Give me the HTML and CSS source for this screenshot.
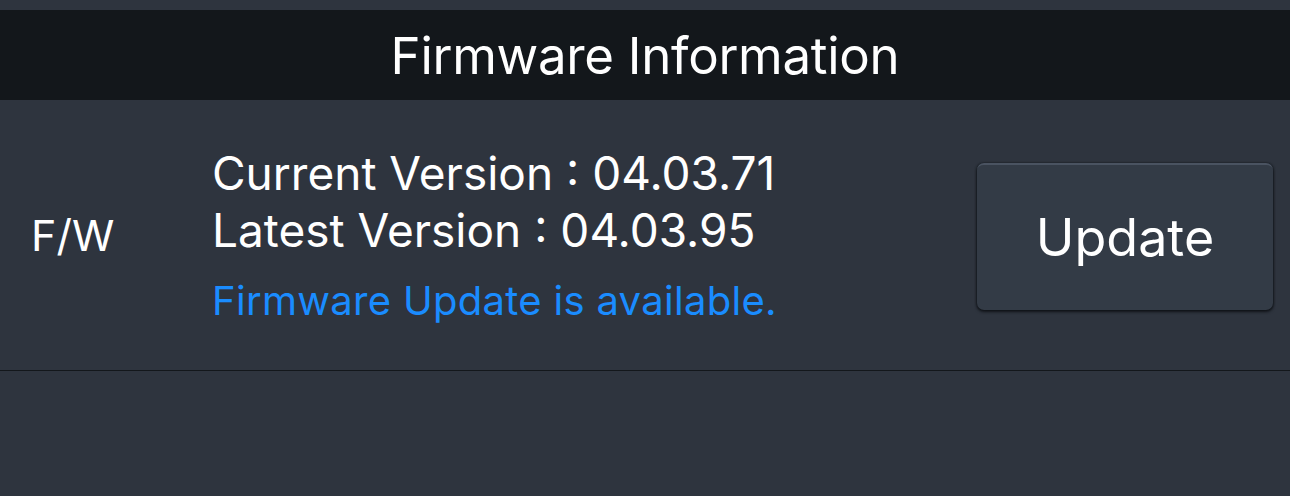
FILE: index.html
```html
<!DOCTYPE html>
<html>
<head>
<meta charset="utf-8">
<link rel="stylesheet" href="styles.css">
</head>
<body>
<div class="page">
  <div class="topstrip"></div>
  <header class="title-bar">Firmware Information</header>
  <section class="row">
    <div class="label">F/W</div>
    <div class="info">
      <div class="line">Current Version : 04.03.71</div>
      <div class="line">Latest Version : 04.03.95</div>
      <div class="notice">Firmware Update is available.</div>
    </div>
    <button class="update-btn">Update</button>
  </section>
</div>
</body>
</html>
```
FILE: styles.css
```css
html, body {
  margin: 0;
  padding: 0;
  background: #2e343e;
}
body {
  font-family: Inter, "Noto Sans", sans-serif;
  color: #ffffff;
  width: 1290px;
  height: 496px;
  overflow: hidden;
}
.page {
  display: flex;
  flex-direction: column;
}
.topstrip {
  height: 10px;
}
.title-bar {
  height: 90px;
  background: #13171b;
  display: flex;
  align-items: center;
  justify-content: center;
  font-size: 51px;
  letter-spacing: -0.3px;
}
.row {
  height: 270px;
  border-bottom: 1px solid #13171b;
  display: flex;
  align-items: center;
}
.label {
  width: 212px;
  padding-left: 31px;
  box-sizing: border-box;
  font-size: 43px;
}
.info {
  flex: 1;
  display: flex;
  flex-direction: column;
}
.line {
  font-size: 46px;
  line-height: 57px;
}
.notice {
  color: #1a8cff;
  font-size: 40px;
  line-height: 48px;
  margin-top: 18px;
  letter-spacing: 0.3px;
}
.update-btn {
  width: 296px;
  height: 147px;
  margin-right: 17px;
  margin-top: 2px;
  background: #333b46;
  border: none;
  border-top: 2px solid #4a5361;
  border-radius: 7px;
  box-shadow: 0 2px 3px rgba(10, 12, 16, 0.8), -1px 0 2px rgba(10, 12, 16, 0.4), 1px 0 2px rgba(10, 12, 16, 0.4);
  color: #ffffff;
  font-family: Inter, "Noto Sans", sans-serif;
  font-size: 52px;
  padding: 0;
}
```
